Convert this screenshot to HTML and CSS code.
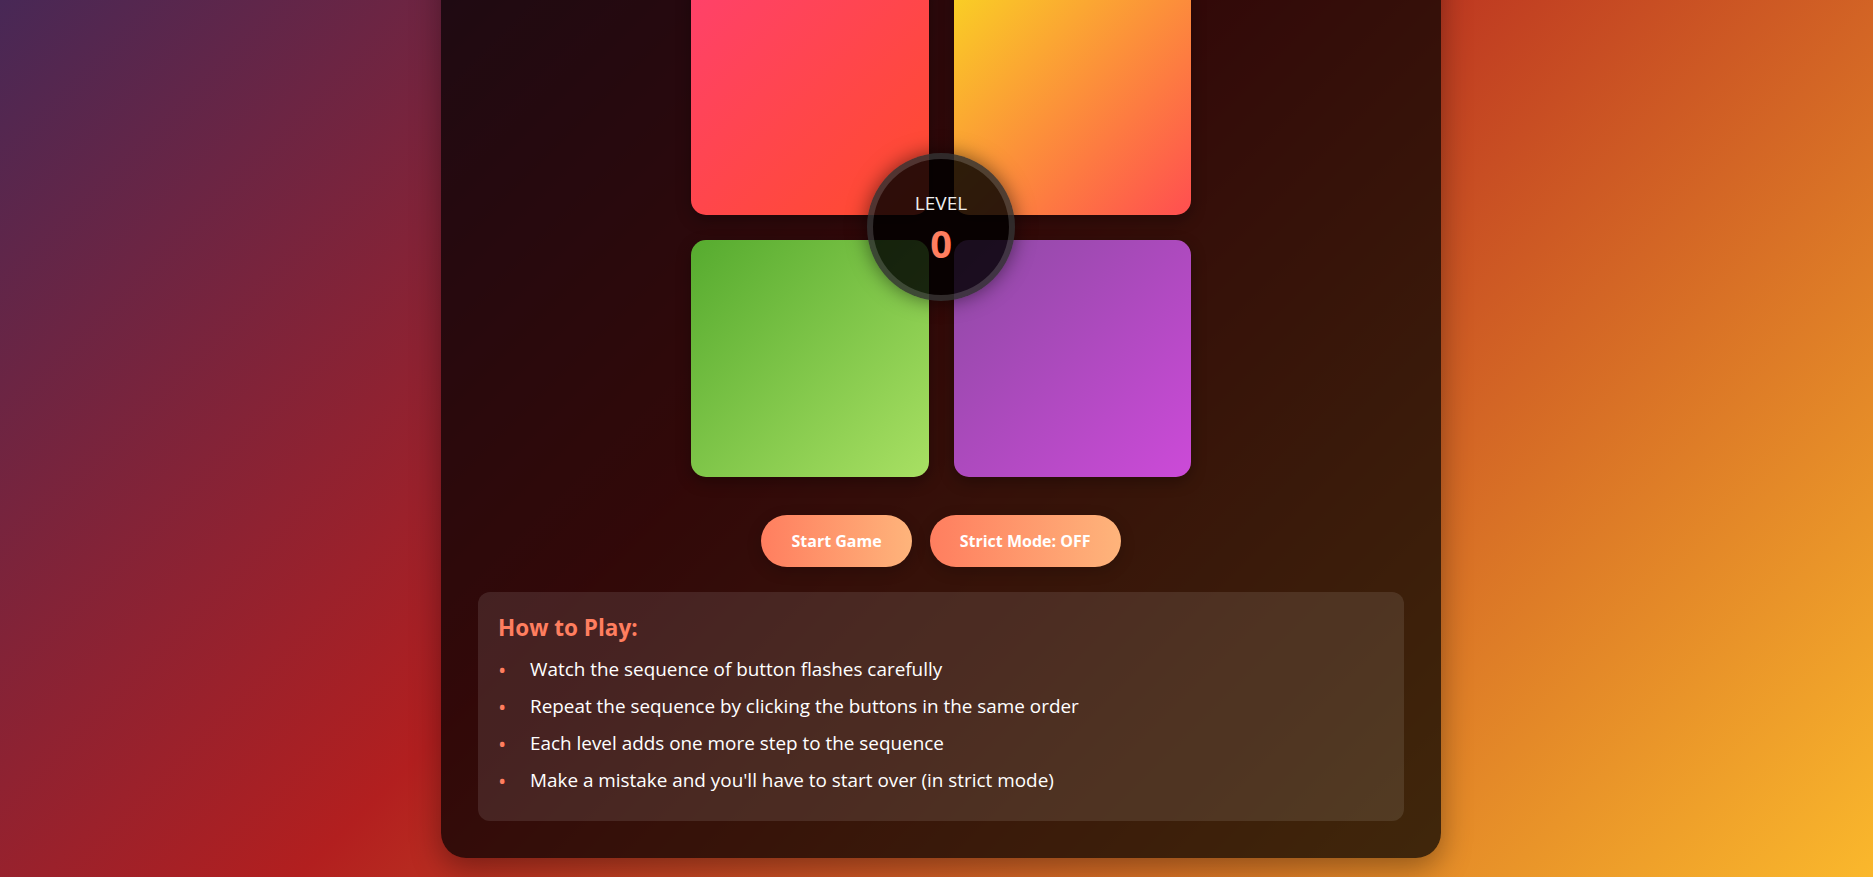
FILE: index.html
```html
<!DOCTYPE html>
<html lang="en">
<head>
<meta charset="utf-8">
<title>Simon Game</title>
<link rel="stylesheet" href="styles.css">
</head>
<body>
<main class="page">
  <section class="card">
    <div class="board">
      <div class="pads">
        <button class="pad pad-red" aria-label="red"></button>
        <button class="pad pad-yellow" aria-label="yellow"></button>
        <button class="pad pad-green" aria-label="green"></button>
        <button class="pad pad-purple" aria-label="purple"></button>
      </div>
      <div class="level">
        <span class="level-label">LEVEL</span>
        <span class="level-value">0</span>
      </div>
    </div>
    <div class="controls">
      <button class="btn">Start Game</button>
      <button class="btn">Strict Mode: OFF</button>
    </div>
    <div class="howto">
      <h3 class="howto-title">How to Play:</h3>
      <ul class="howto-list">
        <li class="howto-item">Watch the sequence of button flashes carefully</li>
        <li class="howto-item">Repeat the sequence by clicking the buttons in the same order</li>
        <li class="howto-item">Each level adds one more step to the sequence</li>
        <li class="howto-item">Make a mistake and you'll have to start over (in strict mode)</li>
      </ul>
    </div>
  </section>
</main>
</body>
</html>
```

FILE: styles.css
```css
* { box-sizing: border-box; }

html, body {
  margin: 0;
  padding: 0;
  height: 100%;
}

body {
  font-family: "Open Sans", "Liberation Sans", sans-serif;
  color: #fff;
  background: linear-gradient(135deg, #482856 0%, #b21f1f 42.7%, #fab82c 100%);
  overflow: hidden;
}

.page {
  height: 100vh;
  display: flex;
  flex-direction: column;
  justify-content: flex-end;
  align-items: center;
  padding: 0 0 19px 9px;
  overflow: hidden;
}

.card {
  flex-shrink: 0;
  width: 1000px;
  padding: 37px 37px 37px;
  background: rgba(0, 0, 0, 0.72);
  border-radius: 25px;
  box-shadow: 0 10px 30px rgba(0, 0, 0, 0.35);
  display: flex;
  flex-direction: column;
  align-items: center;
}

.board {
  position: relative;
  width: 500px;
}

.pads {
  display: grid;
  grid-template-columns: 1fr 1fr;
  gap: 25px;
}

.pad {
  border: none;
  padding: 0;
  aspect-ratio: 1 / 1;
  border-radius: 15px;
  box-shadow: 0 5px 15px rgba(0, 0, 0, 0.3);
}

.pad-red { background: linear-gradient(135deg, #ff416c, #ff4b2b); }
.pad-yellow { background: linear-gradient(135deg, #f9d423, #ff4e50); }
.pad-green { background: linear-gradient(135deg, #56ab2f, #a8e063); }
.pad-purple { background: linear-gradient(135deg, #8e4aa4, #cc4ad8); }

.level {
  position: absolute;
  left: 50%;
  top: 50%;
  width: 148px;
  height: 148px;
  transform: translate(-50%, -50%);
  border-radius: 50%;
  background: rgba(0, 0, 0, 0.82);
  border: 6px solid rgba(255, 255, 255, 0.16);
  box-shadow: 0 0 20px rgba(0, 0, 0, 0.5);
  display: flex;
  flex-direction: column;
  align-items: center;
  justify-content: center;
  padding-top: 3px;
}

.level-label {
  font-size: 19px;
  line-height: 22px;
  color: #eee;
  margin-bottom: 7px;
}

.level-value {
  font-size: 38px;
  line-height: 44px;
  font-weight: 700;
  color: #ff7e5f;
}

.controls {
  display: flex;
  justify-content: center;
  gap: 18px;
  margin: 38px 0 25px;
}

.btn {
  font-family: inherit;
  font-size: 16px;
  line-height: 22px;
  font-weight: 700;
  color: #fff;
  border: none;
  padding: 15px 30px;
  border-radius: 30px;
  background: linear-gradient(90deg, #ff7e5f, #feb47b);
  box-shadow: 0 4px 15px rgba(0, 0, 0, 0.2);
}

.howto {
  align-self: stretch;
  background: rgba(255, 255, 255, 0.1);
  border-radius: 12px;
  padding: 20px 20px 18px;
}

.howto-title {
  margin: 0 0 11px;
  font-size: 22.5px;
  line-height: 32px;
  font-weight: 700;
  color: #ff7e5f;
}

.howto-list {
  list-style: none;
  margin: 0;
  padding: 0;
}

.howto-item {
  display: flex;
  font-size: 18.9px;
  line-height: 29px;
  margin-bottom: 8px;
  color: #fff;
}

.howto-item::before {
  content: "•";
  flex: 0 0 32px;
  color: #ff7e5f;
  font-size: 22px;
  line-height: 29px;
}
```
